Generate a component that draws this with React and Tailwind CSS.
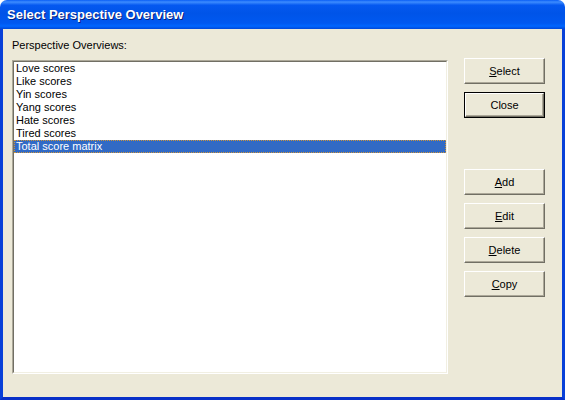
import React from 'react'

const items = ['Love scores', 'Like scores', 'Yin scores', 'Yang scores', 'Hate scores', 'Tired scores', 'Total score matrix']

function XpButton({ label, hot, isDefault }) {
  // label: text, hot: index of the underlined accelerator letter
  const text = hot == null ? label : (
    <>
      {label.slice(0, hot)}
      <span className="underline underline-offset-[1px]">{label[hot]}</span>
      {label.slice(hot + 1)}
    </>
  )
  return (
    <div className={`w-[81px] h-[26px] ${isDefault ? 'border border-black' : ''}`}>
      <button className="w-full h-full flex items-center justify-center bg-[#ece9d8] border border-t-white border-l-white border-b-[#716f64] border-r-[#716f64] shadow-[inset_-1px_-1px_0_#aca899] text-[11px] text-black leading-none">
        {text}
      </button>
    </div>
  )
}

export default function App() {
  return (
    <div className="w-[565px] h-[400px] flex flex-col font-['Liberation_Sans',Arial,sans-serif] select-none">
      {/* Title bar */}
      <div className="h-[29px] rounded-t-[7px] flex items-center pl-[7px] bg-[linear-gradient(180deg,#0a5ef5_0%,#3d8cff_7%,#0458f0_18%,#0054e8_45%,#0058f0_80%,#0066ff_90%,#0047d8_100%)]">
        <span className="text-white font-bold text-[13px] [text-shadow:1px_1px_0_#0a1e78]">
          Select Perspective Overview
        </span>
      </div>

      {/* Body */}
      <div className="flex-1 flex flex-col bg-[#ece9d8] border-x-[3px] border-b-[3px] border-x-[#0840d8] border-b-[#0830c8]">
        <div className="pl-[9px] pt-[10px] text-[11px] leading-[13px] text-black">Perspective Overviews:</div>

        <div className="flex-1 flex gap-[16px] pl-[9px] pr-[17px] pt-[6px] pb-[23px]">
          {/* List box */}
          <div className="mt-[2px] w-[436px] border border-t-[#aca899] border-l-[#aca899] border-b-white border-r-white">
            <div className="h-full bg-white border border-t-[#716f64] border-l-[#716f64] border-b-[#f1efe2] border-r-[#f1efe2]">
              {items.map((item, i) =>
                i === items.length - 1 ? (
                  <div key={item} className="h-[13px] leading-[11px] text-[11px] text-white bg-[#316ac5] border border-dotted border-[#ce953a] pl-[1px]">
                    {item}
                  </div>
                ) : (
                  <div key={item} className="h-[13px] leading-[13px] text-[11px] text-black pl-[2px]">
                    {item}
                  </div>
                )
              )}
            </div>
          </div>

          {/* Buttons */}
          <div className="flex flex-col gap-[8px]">
            <XpButton label="Select" hot={0} />
            <XpButton label="Close" isDefault />
            <div className="h-[35px]" />
            <XpButton label="Add" hot={0} />
            <XpButton label="Edit" hot={0} />
            <XpButton label="Delete" hot={0} />
            <XpButton label="Copy" hot={0} />
          </div>
        </div>
      </div>
    </div>
  )
}
